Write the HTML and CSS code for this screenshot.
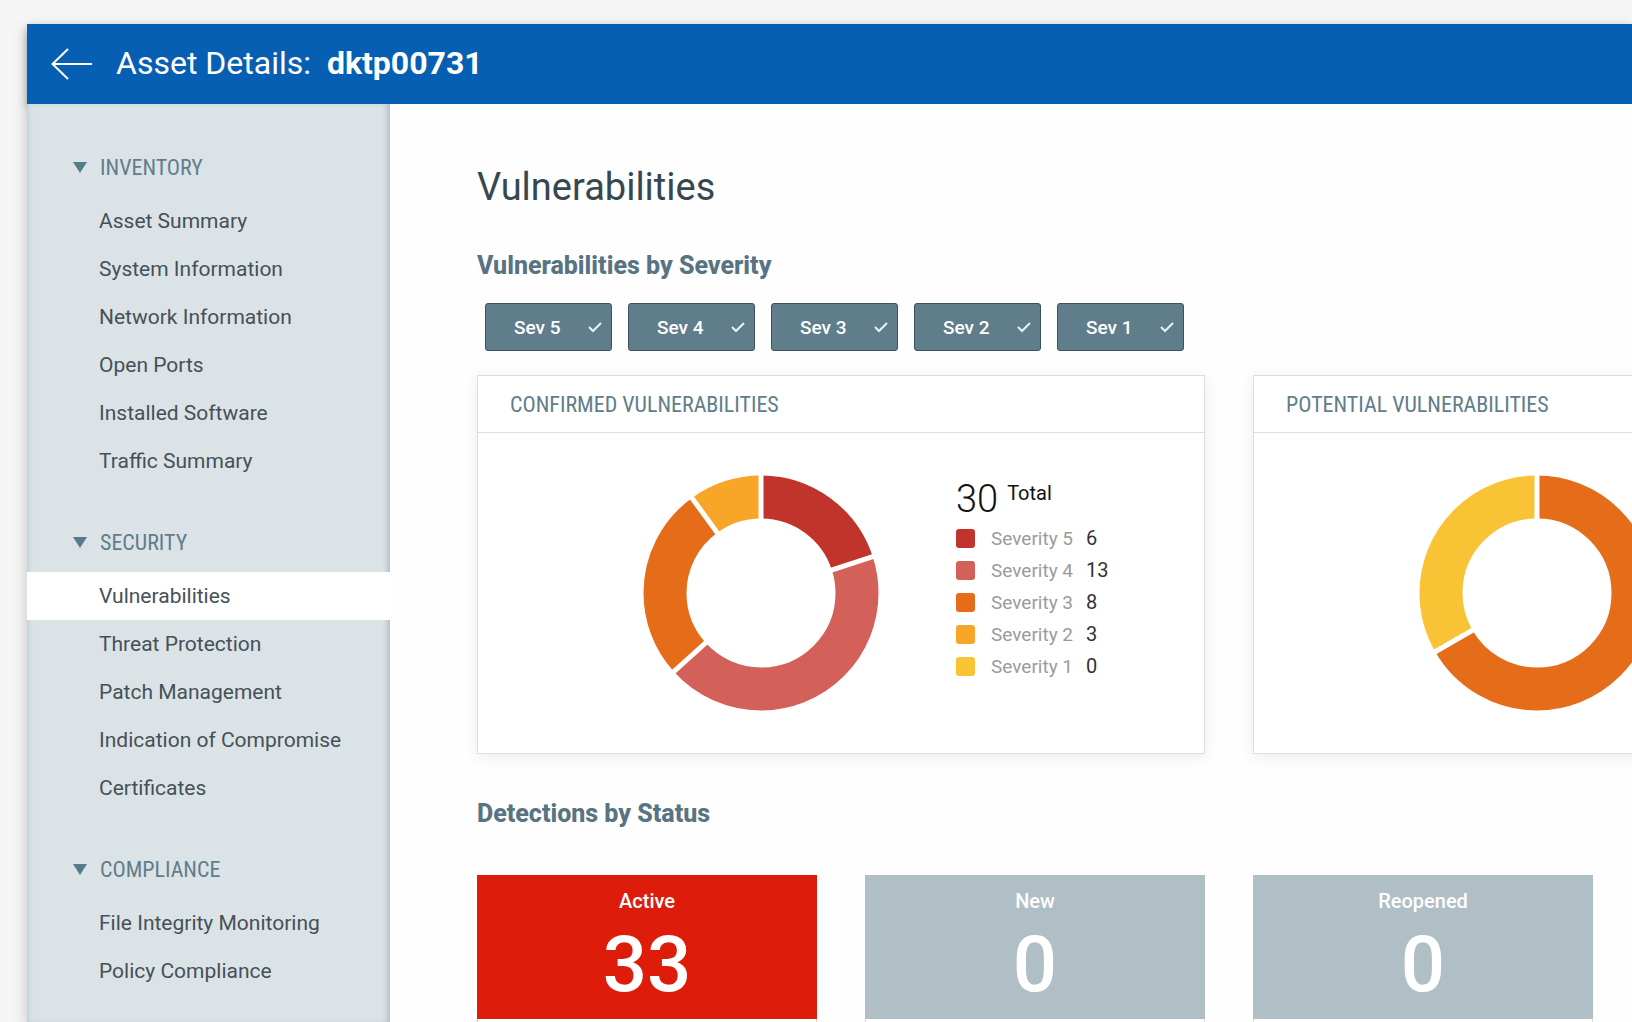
FILE: index.html
```html
<!DOCTYPE html>
<html lang="en">
<head>
    <meta charset="UTF-8">
    <meta name="viewport" content="width=device-width, initial-scale=1.0">
    <title>Asset Details: dktp00731</title>
    <link rel="stylesheet" href="styles.css">
</head>
<body>

<div class="window">
    <header class="topbar">
        <button type="button" class="back" aria-label="Back">
            <svg width="42" height="32" viewBox="0 0 42 32" fill="none" stroke="currentColor" stroke-width="2">
                <path d="M1 16H41M17 1L1.500 16L17 31"/>
            </svg>
        </button>
        <div class="title">Asset Details: <strong>dktp00731</strong></div>
    </header>

    <div class="layout">
        <nav class="sidebar">
            <section class="group">
                <button type="button" class="group-title">Inventory</button>
                <a href="#">Asset Summary</a>
                <a href="#">System Information</a>
                <a href="#">Network Information</a>
                <a href="#">Open Ports</a>
                <a href="#">Installed Software</a>
                <a href="#">Traffic Summary</a>
            </section>
            <section class="group">
                <button type="button" class="group-title">Security</button>
                <a href="#" class="active">Vulnerabilities</a>
                <a href="#">Threat Protection</a>
                <a href="#">Patch Management</a>
                <a href="#">Indication of Compromise</a>
                <a href="#">Certificates</a>
            </section>
            <section class="group">
                <button type="button" class="group-title">Compliance</button>
                <a href="#">File Integrity Monitoring</a>
                <a href="#">Policy Compliance</a>
            </section>
        </nav>

        <main class="content">
            <h1>Vulnerabilities</h1>

            <h2>Vulnerabilities by Severity</h2>
            <div class="filters">
                <button type="button" class="filter" aria-pressed="true">Sev 5
                    <svg class="check" viewBox="0 0 14 12"><path d="M1 6L5 10L13 2"/></svg>
                </button>
                <button type="button" class="filter" aria-pressed="true">Sev 4
                    <svg class="check" viewBox="0 0 14 12"><path d="M1 6L5 10L13 2"/></svg>
                </button>
                <button type="button" class="filter" aria-pressed="true">Sev 3
                    <svg class="check" viewBox="0 0 14 12"><path d="M1 6L5 10L13 2"/></svg>
                </button>
                <button type="button" class="filter" aria-pressed="true">Sev 2
                    <svg class="check" viewBox="0 0 14 12"><path d="M1 6L5 10L13 2"/></svg>
                </button>
                <button type="button" class="filter" aria-pressed="true">Sev 1
                    <svg class="check" viewBox="0 0 14 12"><path d="M1 6L5 10L13 2"/></svg>
                </button>
            </div>

            <div class="cards">
                <section class="card">
                    <h3>Confirmed Vulnerabilities</h3>
                    <div class="card-body">
                        <!-- one path unit per vulnerability -->
                        <svg class="donut" viewBox="-118 -118 236 236">
                            <g class="slices" transform="rotate(-90)">
                                <circle class="s5" r="96" pathLength="30" stroke-dasharray="6 24"/>
                                <circle class="s4" r="96" pathLength="30" stroke-dasharray="13 17" stroke-dashoffset="-6"/>
                                <circle class="s3" r="96" pathLength="30" stroke-dasharray="8 22" stroke-dashoffset="-19"/>
                                <circle class="s2" r="96" pathLength="30" stroke-dasharray="3 27" stroke-dashoffset="-27"/>
                            </g>
                            <g class="gaps">
                                <path d="M0 -70V-120"/>
                                <path d="M0 -70V-120" transform="rotate(72)"/>
                                <path d="M0 -70V-120" transform="rotate(228)"/>
                                <path d="M0 -70V-120" transform="rotate(324)"/>
                            </g>
                        </svg>
                        <div class="legend">
                            <div class="total"><span class="total-number">30</span> Total</div>
                            <ul>
                                <li><i class="swatch s5"></i><span>Severity 5</span><b>6</b></li>
                                <li><i class="swatch s4"></i><span>Severity 4</span><b>13</b></li>
                                <li><i class="swatch s3"></i><span>Severity 3</span><b>8</b></li>
                                <li><i class="swatch s2"></i><span>Severity 2</span><b>3</b></li>
                                <li><i class="swatch s1"></i><span>Severity 1</span><b>0</b></li>
                            </ul>
                        </div>
                    </div>
                </section>

                <section class="card">
                    <h3>Potential Vulnerabilities</h3>
                    <div class="card-body">
                        <svg class="donut" viewBox="-118 -118 236 236">
                            <g class="slices" transform="rotate(-90)">
                                <circle class="s3" r="96" pathLength="3" stroke-dasharray="2 1"/>
                                <circle class="s1" r="96" pathLength="3" stroke-dasharray="1 2" stroke-dashoffset="-2"/>
                            </g>
                            <g class="gaps">
                                <path d="M0 -70V-120"/>
                                <path d="M0 -70V-120" transform="rotate(240)"/>
                            </g>
                        </svg>
                    </div>
                </section>
            </div>

            <h2>Detections by Status</h2>
            <div class="tiles">
                <section class="tile red">
                    <div class="tile-head">Active<span class="count">33</span></div>
                </section>
                <section class="tile">
                    <div class="tile-head">New<span class="count">0</span></div>
                </section>
                <section class="tile">
                    <div class="tile-head">Reopened<span class="count">0</span></div>
                </section>
            </div>
        </main>
    </div>
</div>

</body>
</html>
```
FILE: styles.css
```css
* {
    box-sizing: border-box;
}
body {
    font-family: Roboto, sans-serif;
    font-size: 20px;
    background-color: #f5f5f5;
    margin: 0;
    padding: 24px 0 0 27px;
    height: 100vh;
    overflow: hidden;
    color: #37474f;
}
button {
    font-family: inherit;
    border: none;
    padding: 0;
    cursor: pointer;
}
.window {
    display: flex;
    flex-direction: column;
    height: 100%;
    box-shadow: 0 6px 14px rgba(0, 0, 0, 0.2);
}
.topbar {
    display: flex;
    align-items: center;
    gap: 23px;
    height: 80px;
    flex-shrink: 0;
    padding-left: 24px;
    background-color: #075fb3;
    color: #fff;
    box-shadow: 0 4px 8px rgba(0, 0, 0, 0.25);
}
.back {
    display: flex;
    background: none;
    color: inherit;
}
.title {
    font-size: 32px;
    padding-bottom: 2px;
}
.title strong {
    margin-left: 8px;
}
.layout {
    display: flex;
    flex: 1;
    min-height: 0;
}

/* sidebar */
.sidebar {
    width: 363px;
    flex-shrink: 0;
    padding-top: 33px;
    background-color: #dce3e6;
    box-shadow: inset -5px 0 5px -2px rgba(96, 125, 150, 0.35), inset 5px 0 5px -4px rgba(96, 125, 170, 0.25);
}
.group {
    margin-bottom: 27px;
}
.group-title {
    display: flex;
    align-items: center;
    gap: 13px;
    width: 100%;
    height: 60px;
    padding-left: 46px;
    background: none;
    color: #607d8b;
    font-family: "Roboto Condensed", "Liberation Sans Narrow", sans-serif;
    font-size: 22px;
    text-transform: uppercase;
}
.group-title::before {
    content: "";
    border: 7px solid transparent;
    border-top: 11px solid #557c8b;
    border-bottom: 0;
}
.sidebar a {
    display: block;
    height: 48px;
    line-height: 48px;
    padding-left: 72px;
    color: #455158;
    font-size: 21px;
    text-decoration: none;
}
.sidebar a.active {
    background-color: #fff;
}

/* content */
.content {
    flex: 1;
    padding: 57px 48px 0 87px;
    background-color: #fefefe;
}
h1 {
    font-size: 38px;
    font-weight: 400;
    line-height: 52px;
    margin: 0;
}
h2 {
    font-size: 25px;
    font-weight: 800;
    line-height: 32px;
    color: #587482;
    margin: 37px 0 0;
}
h3 {
    font-family: "Roboto Condensed", "Liberation Sans Narrow", sans-serif;
    font-size: 22px;
    font-weight: 400;
    line-height: 54px;
    text-transform: uppercase;
    color: #607d8b;
    margin: 0;
    padding: 2px 0 0 32px;
    border-bottom: 1px solid #dedede;
}
.filters {
    display: flex;
    gap: 16px;
    margin: 21px 8px 24px;
}
.filter {
    display: flex;
    align-items: center;
    justify-content: space-between;
    width: 127px;
    height: 48px;
    padding: 0 9px 0 28px;
    border: 1px solid #3c525e;
    border-radius: 3px;
    background-color: #607d8b;
    color: #fff;
    font-size: 19px;
    font-weight: 500;
}
.check {
    width: 14px;
    height: 12px;
    fill: none;
    stroke: #e8f4fa;
    stroke-width: 2;
}
.cards {
    display: grid;
    grid-template-columns: repeat(2, minmax(728px, 1fr));
    gap: 48px;
    margin-bottom: 44px;
}
.card {
    border: 1px solid #dedede;
    background-color: #fff;
    box-shadow: 0 3px 14px rgba(0, 0, 0, 0.08);
}
.card-body {
    display: flex;
    gap: 77px;
    height: 320px;
    padding: 42px 0 0 165px;
}
.donut {
    width: 236px;
    height: 236px;
}
.slices {
    fill: none;
    stroke-width: 43;
}
.gaps {
    stroke: #fff;
    stroke-width: 5;
}
.s5 { stroke: #c0342b; background-color: #c0342b; }
.s4 { stroke: #d3615a; background-color: #d3615a; }
.s3 { stroke: #e56c18; background-color: #e56c18; }
.s2 { stroke: #f8a628; background-color: #f8a628; }
.s1 { stroke: #f8c435; background-color: #f8c435; }
.legend ul {
    list-style: none;
    margin: 0;
    padding: 0;
}
.legend li {
    display: flex;
    align-items: center;
    height: 32px;
    color: #9b9b9b;
    font-size: 19px;
}
.legend span {
    margin: 0 13px 0 16px;
}
.legend b {
    font-size: 20px;
    font-weight: 400;
    color: #333;
}
.swatch {
    width: 19px;
    height: 19px;
    border-radius: 3px;
}
.total {
    display: flex;
    gap: 9px;
    height: 47px;
    line-height: 36px;
    color: #111;
}
.legend .total-number {
    margin: 0;
    font-size: 38px;
    font-weight: 300;
    line-height: 48px;
}
.tiles {
    display: grid;
    grid-template-columns: repeat(4, minmax(340px, 1fr));
    gap: 48px;
    margin-top: 45px;
}
.tile {
    height: 240px;
    border: 1px solid #d5e0e6;
    border-top: none;
}
.tile-head {
    height: 144px;
    margin: 0 -1px;
    padding-top: 14px;
    background-color: #b0bec5;
    color: #fff;
    font-weight: 500;
    line-height: 24px;
    text-align: center;
}
.red {
    border-color: #f3c5b5;
}
.red .tile-head {
    background-color: #de1c0a;
}
.count {
    display: block;
    font-size: 78px;
    font-weight: 500;
    line-height: 104px;
}
```
